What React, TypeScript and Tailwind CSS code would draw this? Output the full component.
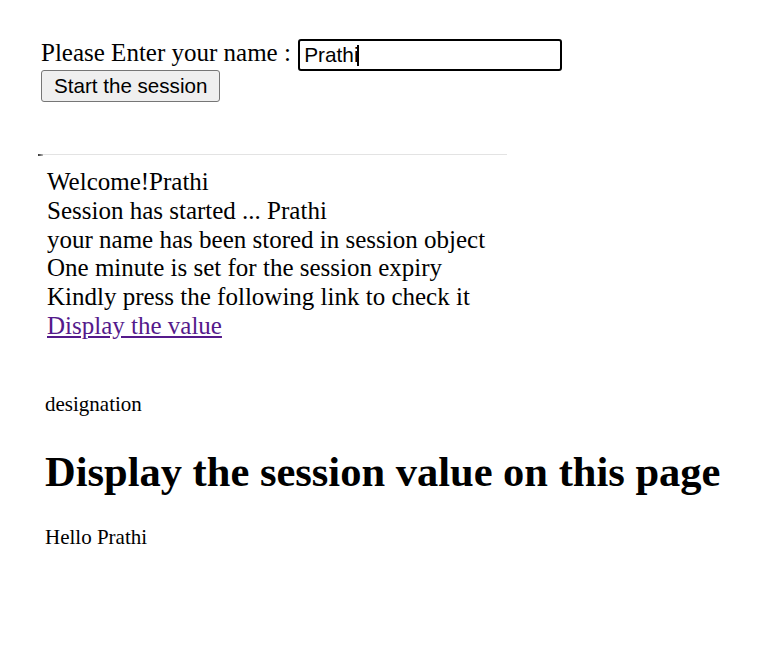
import React from "react";

export default function App() {
  return (
    <main className="min-h-screen w-full bg-white pt-[39px] pl-[41px] text-black font-['Liberation_Serif',serif]">
      {/* name form */}
      <div className="flex items-start">
        <span className="text-[25px] leading-[28.75px] whitespace-pre">Please Enter your name : </span>
        <div className="relative ml-[1px]">
          <input
            readOnly
            defaultValue="Prathi"
            className="h-[32px] w-[264px] rounded-[3px] border-2 border-black bg-white px-[4px] text-[20.8px] font-['Liberation_Sans',Arial,sans-serif] outline-none"
          />
          <span className="absolute left-[59px] top-[6px] h-[21px] w-[2px] bg-black"></span>
        </div>
      </div>
      <button className="mt-[-1px] h-[32px] rounded-[3px] border border-[#767676] bg-[#efefef] px-[12px] text-[20.6px] leading-none font-['Liberation_Sans',Arial,sans-serif]">
        Start the session
      </button>

      {/* divider */}
      <div className="mt-[52px] ml-[-3px] flex h-[2px] w-[469px] items-start">
        <div className="h-[2px] w-[5px] bg-gradient-to-r from-[#333] to-[#bbb]"></div>
        <div className="h-[1px] flex-1 bg-[#e3e3e3]"></div>
      </div>

      {/* session info */}
      <div className="mt-[12px] ml-[6px] flex flex-col text-[25px] leading-[28.75px]">
        <span>Welcome!Prathi</span>
        <span>Session has started ... Prathi</span>
        <span>your name has been stored in session object</span>
        <span>One minute is set for the session expiry</span>
        <span>Kindly press the following link to check it</span>
        <a href="#" className="w-fit text-[#551a8b] underline">
          Display the value
        </a>
      </div>

      {/* display page */}
      <div className="ml-[4px] mt-[51px] flex flex-col">
        <p className="text-[21px] leading-[24px]">designation</p>
        <h1 className="mt-[32px] text-[42.5px] font-bold leading-[48px]">
          Display the session value on this page
        </h1>
        <p className="mt-[29px] text-[21px] leading-[24px]">Hello Prathi</p>
      </div>
    </main>
  );
}
